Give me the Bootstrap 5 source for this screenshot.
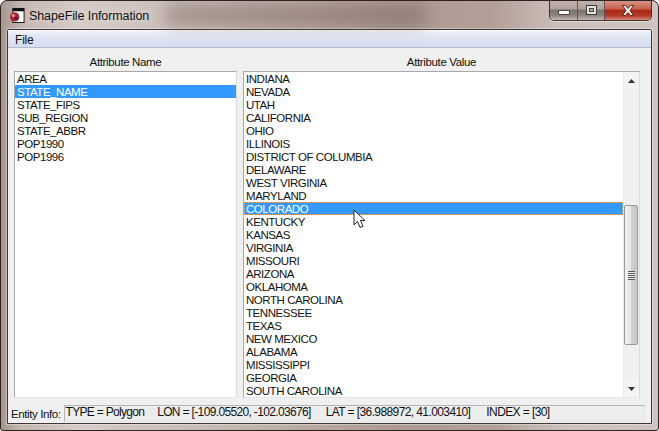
<!DOCTYPE html>
<html><head><meta charset="utf-8">
<link href="https://cdn.jsdelivr.net/npm/bootstrap@5.3.0/dist/css/bootstrap.min.css" rel="stylesheet">
<style>
html,body{height:100%;margin:0;background:#fff;overflow:hidden}
body{font-family:"Liberation Sans",Arial,sans-serif;font-size:11.5px;letter-spacing:-.45px;line-height:13px;color:#000}
.win-frame{height:431px;width:659px;border:1px solid #2a2320;border-radius:7px 7px 3px 3px;padding:0 6px 6px 6px;position:relative;overflow:hidden;
 background:linear-gradient(90deg,#a8958e 0,#c6b7b1 3%,#d6cbc6 12%,#c9bbb5 30%,#ae9a93 60%,#b29f98 75%,#cdbfba 85%,#cfc4bf 100%)}
.win-blur{position:absolute;left:165px;top:3px;width:260px;height:22px;background:#6a5750;filter:blur(8px);opacity:.4}
.win-title{height:28px;position:relative;padding-left:2px;gap:4px}
.win-icon{width:16px;height:17px;flex:none;margin-top:1px}
.win-name{font-size:12.5px;letter-spacing:-.1px;color:#111;text-shadow:0 0 6px rgba(255,255,255,.75);margin-top:2px}
.win-btns{position:absolute;top:-1px;right:0;height:21px;border:1px solid #3d3531;border-top:0;border-radius:0 0 5px 5px;overflow:hidden;box-shadow:0 1px 0 rgba(255,255,255,.5)}
.win-btn{height:20px;display:flex;align-items:center;justify-content:center;border-right:1px solid #5d5450;background:linear-gradient(#c3b4ae 0,#b0a19b 45%,#7f736e 50%,#8d817c 75%,#c5b9b4 100%)}
.win-min{width:28px}.win-max{width:27px}
.win-close{width:46px;border:0;background:linear-gradient(#d89a8c 0,#c9604c 45%,#a9281a 52%,#b53a28 78%,#d9867a 100%)}
.min-glyph{width:12px;height:5px;margin-top:5px;background:#fff;border:1px solid #4b4643;border-radius:1px}
.max-glyph{width:11px;height:10px;border:1px solid #3e3a38;background:#e5e2e0;padding:2px}
.max-glyph span{display:block;width:100%;height:100%;border:1px solid #444;background:#aaa}
.win-client{flex:1;min-height:0;background:#f0f0f0;border:1px solid #3f3733;border-radius:2px 2px 0 0;box-shadow:0 0 0 1px rgba(255,255,255,.35)}
.win-menu{height:18px;padding:3px 0 0 7px;line-height:14px;font-size:12px;letter-spacing:-.2px;background:linear-gradient(#f6f8fc 0,#e3e8f4 30%,#d5dcee 100%);border-bottom:1px solid #b4b9d0;color:#111}
.win-body{flex:1;min-height:0;padding:6px 11px 0 6px}
.col-left{width:223px;flex:none;margin-right:6px}
.col-right{width:397px;flex:none}
.col-head{height:17px;text-align:center;line-height:17px;font-size:11.5px;letter-spacing:-.35px;color:#111}
.win-list{height:327px;background:#fff;border:1px solid #a9a9a9;border-right-color:#dcdcdc;border-bottom-color:#e6e6e6;overflow:hidden}
.win-rows{flex:1;min-width:0;padding:0;margin:0;list-style:none}
.win-rows li{height:13px;line-height:15px;padding-left:2px;white-space:nowrap;color:#111}
.win-rows li.is-sel{background:#3399ff;color:#fff}
.win-rows li.is-focus{outline:1px dotted #eeb27a;outline-offset:-1px}
.win-sb{width:16px;flex:none;background:#f0f0f0;position:relative;border-left:1px solid #e8e8e8}
.sb-up,.sb-down{height:17px;display:flex;align-items:center;justify-content:center;background:#f3f3f3}
.sb-space{height:116px}
.sb-thumb{height:140px;margin:0 1px 0 0;border:1px solid #999;border-radius:2px;background:linear-gradient(90deg,#f0f0f0 0,#e8e8e8 45%,#cfcfcf 55%,#c8c8c8 100%);display:flex;align-items:center;justify-content:center}
.grip{width:7px;height:9px;background:repeating-linear-gradient(#555 0,#555 1px,#eee 1px,#eee 2px)}
.sb-fill{flex:1}
.win-status{height:20px;margin:6px -5px 0 -3px;gap:3px}
.st-label{font-size:11.5px;letter-spacing:-.4px;color:#111;padding-top:4px}
.st-box{flex:1;height:17px;margin-top:1px;background:#ededed;border:1px solid #b5b5b5;border-right-color:#e4e4e4;border-bottom-color:#e4e4e4;line-height:13px;padding-left:1px;white-space:pre;color:#111;overflow:hidden;font-size:12px;letter-spacing:-.6px;gap:15px}
.st-type{letter-spacing:-.7px;margin-right:-2px}
.st-lon{letter-spacing:-.65px}
.st-idx{margin-left:1px}
.cursor-pt{position:absolute;left:352px;top:208px;width:13px;height:20px}
</style></head>
<body>
<div class="win-frame d-flex flex-column">
 <div class="win-blur"></div>
 <div class="win-title d-flex align-items-center">
  <svg class="win-icon" viewBox="0 0 17 17"><rect x="4" y="1" width="12" height="15" fill="#fff" stroke="#111"/><rect x="4" y="1" width="12" height="3" fill="#111"/><circle cx="6" cy="10" r="5" fill="#a8283a"/><circle cx="4.500" cy="8.500" r="1.600" fill="#e6a0a0"/><circle cx="7.500" cy="11.500" r="1.500" fill="#5a1020"/></svg>
  <span class="win-name">ShapeFile Information</span>
  <div class="win-btns d-flex">
   <div class="win-btn win-min"><div class="min-glyph"></div></div>
   <div class="win-btn win-max"><div class="max-glyph"><span></span></div></div>
   <div class="win-btn win-close"><svg width="16" height="13" viewBox="0 0 16 13"><path d="M2.500 1.500h3L8 4.500l2.500-3h3L10 6.500l3.500 5h-3L8 8.500l-2.500 3h-3L6 6.500z" fill="#f4efec" stroke="#5c2a20"/></svg></div>
  </div>
 </div>
 <div class="win-client d-flex flex-column">
  <div class="win-menu">File</div>
  <div class="win-body d-flex flex-column">
   <div class="d-flex">
    <div class="col-left">
     <div class="col-head">Attribute Name</div>
     <div class="win-list d-flex">
      <ul class="win-rows">
       <li>AREA</li><li class="is-sel">STATE_NAME</li><li>STATE_FIPS</li><li>SUB_REGION</li><li>STATE_ABBR</li><li>POP1990</li><li>POP1996</li>
      </ul>
     </div>
    </div>
    <div class="col-right">
     <div class="col-head">Attribute Value</div>
     <div class="win-list d-flex">
      <ul class="win-rows">
       <li>INDIANA</li><li>NEVADA</li><li>UTAH</li><li>CALIFORNIA</li><li>OHIO</li><li>ILLINOIS</li><li>DISTRICT OF COLUMBIA</li><li>DELAWARE</li><li>WEST VIRGINIA</li><li>MARYLAND</li><li class="is-sel is-focus">COLORADO</li><li>KENTUCKY</li><li>KANSAS</li><li>VIRGINIA</li><li>MISSOURI</li><li>ARIZONA</li><li>OKLAHOMA</li><li>NORTH CAROLINA</li><li>TENNESSEE</li><li>TEXAS</li><li>NEW MEXICO</li><li>ALABAMA</li><li>MISSISSIPPI</li><li>GEORGIA</li><li>SOUTH CAROLINA</li>
      </ul>
      <div class="win-sb d-flex flex-column">
       <div class="sb-up"><svg width="7" height="4" viewBox="0 0 7 4"><path d="M3.500 0L7 4H0z" fill="#333"/></svg></div>
       <div class="sb-space"></div>
       <div class="sb-thumb"><div class="grip"></div></div>
       <div class="sb-fill"></div>
       <div class="sb-down"><svg width="7" height="4" viewBox="0 0 7 4"><path d="M0 0h7L3.500 4z" fill="#333"/></svg></div>
      </div>
     </div>
    </div>
   </div>
   <div class="win-status d-flex">
    <div class="st-label">Entity Info:</div>
    <div class="st-box d-flex"><span class="st-type">TYPE = Polygon</span><span class="st-lon">LON = [-109.05520, -102.03676]</span><span>LAT = [36.988972, 41.003410]</span><span class="st-idx">INDEX = [30]</span></div>
   </div>
  </div>
 </div>
 <svg class="cursor-pt" viewBox="0 0 13 20"><path d="M1 1v15l3.500-3.500 2.500 6 3-1.300-2.500-5.700H12z" fill="#fff" stroke="#222" stroke-width="1"/></svg>
</div>
<script src="https://cdn.jsdelivr.net/npm/bootstrap@5.3.0/dist/js/bootstrap.bundle.min.js"></script>
</body></html>
